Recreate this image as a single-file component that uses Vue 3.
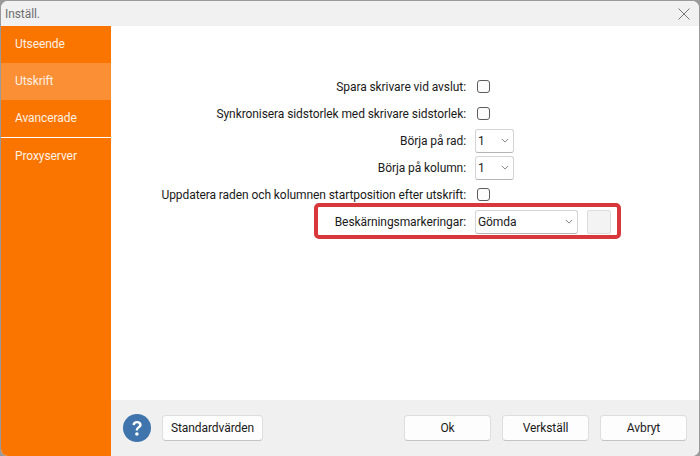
<script setup>
const menu = [
  { name: 'Utseende' },
  { name: 'Utskrift', active: true },
  { name: 'Avancerade', divider: true },
  { name: 'Proxyserver' },
]
</script>

<template>
  <div class="win">
    <div class="titlebar">
      <span class="title">Inställ.</span>
      <svg class="close" width="12" height="12" viewBox="0 0 12 12">
        <path d="M0.5 0.5L11.5 11.5M11.5 0.5L0.5 11.5" stroke="#777" stroke-width="1" fill="none" />
      </svg>
    </div>
    <div class="main">
      <div class="sidebar">
        <div
          v-for="m in menu"
          :key="m.name"
          class="item"
          :class="{ active: m.active, divider: m.divider }"
        >
          {{ m.name }}
        </div>
      </div>
      <div class="right">
        <div class="content">
          <div class="form">
            <label>Spara skrivare vid avslut:</label>
            <div class="ctl"><span class="check"></span></div>
            <label>Synkronisera sidstorlek med skrivare sidstorlek:</label>
            <div class="ctl"><span class="check"></span></div>
            <label>Börja på rad:</label>
            <div class="ctl">
              <div class="select small">
                <span>1</span>
                <svg width="8" height="5" viewBox="0 0 10 6"><path d="M1 1L5 5L9 1" stroke="#666" fill="none" /></svg>
              </div>
            </div>
            <label>Börja på kolumn:</label>
            <div class="ctl">
              <div class="select small">
                <span>1</span>
                <svg width="8" height="5" viewBox="0 0 10 6"><path d="M1 1L5 5L9 1" stroke="#666" fill="none" /></svg>
              </div>
            </div>
            <label>Uppdatera raden och kolumnen startposition efter utskrift:</label>
            <div class="ctl"><span class="check"></span></div>
            <label>Beskärningsmarkeringar:</label>
            <div class="ctl">
              <div class="select wide">
                <span>Gömda</span>
                <svg width="8" height="5" viewBox="0 0 10 6"><path d="M1 1L5 5L9 1" stroke="#666" fill="none" /></svg>
              </div>
              <div class="swatch"></div>
            </div>
          </div>
          <div class="highlight"></div>
        </div>
        <div class="footer">
          <svg class="help" width="28" height="28" viewBox="0 0 28 28">
            <circle cx="14" cy="14" r="14" fill="#3f74ad" />
            <path d="M9.5 11C9.5 8.3 11.5 7 14 7C16.7 7 18.7 8.4 18.7 10.8C18.7 13.8 15 13.9 15 16.5H12.7C12.7 12.8 16 12.6 16 10.9C16 9.9 15.2 9.3 14 9.3C12.8 9.3 12.1 10 12 11.2Z" fill="#fff" />
            <circle cx="13.9" cy="20" r="1.8" fill="#fff" />
          </svg>
          <button class="btn std">Standardvärden</button>
          <div class="spacer"></div>
          <button class="btn">Ok</button>
          <button class="btn">Verkställ</button>
          <button class="btn">Avbryt</button>
        </div>
      </div>
    </div>
  </div>
</template>

<style>
html,
body {
  margin: 0;
  background: #9a9a9a;
}
</style>

<style scoped>
.win {
  width: 698px;
  height: 455px;
  margin: 1px 0 0 1px;
  background: #fff;
  border-radius: 7px;
  overflow: hidden;
  display: flex;
  flex-direction: column;
  font-family: Roboto, "Noto Sans", sans-serif;
  font-size: 12px;
  letter-spacing: -0.08px;
  color: #1a1a1a;
}
.titlebar {
  height: 25px;
  flex: none;
  background: #f1f1f1;
  display: flex;
  align-items: center;
  justify-content: space-between;
  padding: 0 9px 0 4px;
}
.title {
  color: #6f6f6f;
}
.main {
  flex: 1;
  display: flex;
  min-height: 0;
}
.sidebar {
  width: 110px;
  flex: none;
  background: #f97500;
  color: #fdf1e4;
}
.item {
  height: 37px;
  line-height: 36px;
  padding-left: 14px;
}
.item.active {
  background: #fb8f35;
}
.item.divider {
  height: 38px;
  border-bottom: 1px solid #fff;
  box-sizing: border-box;
}
.right {
  flex: 1;
  display: flex;
  flex-direction: column;
  min-width: 0;
}
.content {
  flex: 1;
  position: relative;
  padding-top: 47px;
}
.form {
  display: grid;
  grid-template-columns: 355px 1fr;
  grid-auto-rows: 27px;
  column-gap: 9px;
  align-items: center;
}
.form label {
  text-align: right;
  white-space: nowrap;
}
.ctl {
  display: flex;
  align-items: center;
  gap: 9px;
}
.check {
  width: 11px;
  height: 11px;
  margin-left: 2px;
  border: 1px solid #5c5c5c;
  border-radius: 3px;
  background: #fcfcfc;
}
.select {
  height: 24px;
  box-sizing: border-box;
  border: 1px solid #d4d4d4;
  border-bottom-color: #b4b4b4;
  border-radius: 3px;
  background: #fff;
  display: flex;
  align-items: center;
  justify-content: space-between;
  padding: 0 4px 0 2px;
}
.select.small {
  width: 39px;
}
.select.wide {
  width: 103px;
}
.swatch {
  width: 24px;
  height: 24px;
  box-sizing: border-box;
  background: #f3f3f3;
  border: 1px solid #dcdcdc;
  border-radius: 2px;
}
.highlight {
  position: absolute;
  left: 203px;
  top: 177px;
  width: 307px;
  height: 36px;
  box-sizing: border-box;
  border: 4px solid #d8383c;
  border-radius: 5px;
}
.footer {
  height: 56px;
  flex: none;
  background: #f0f0f0;
  display: flex;
  align-items: center;
  gap: 11px;
  padding: 0 12px;
}
.help {
  flex: none;
}
.spacer {
  flex: 1;
}
.btn {
  width: 87px;
  height: 26px;
  box-sizing: border-box;
  border: 1px solid #dedede;
  border-bottom-color: #c4c4c4;
  border-radius: 4px;
  background: #fdfdfd;
  font: inherit;
  letter-spacing: inherit;
  color: #1a1a1a;
  padding: 0;
}
.std {
  width: 101px;
}
</style>
